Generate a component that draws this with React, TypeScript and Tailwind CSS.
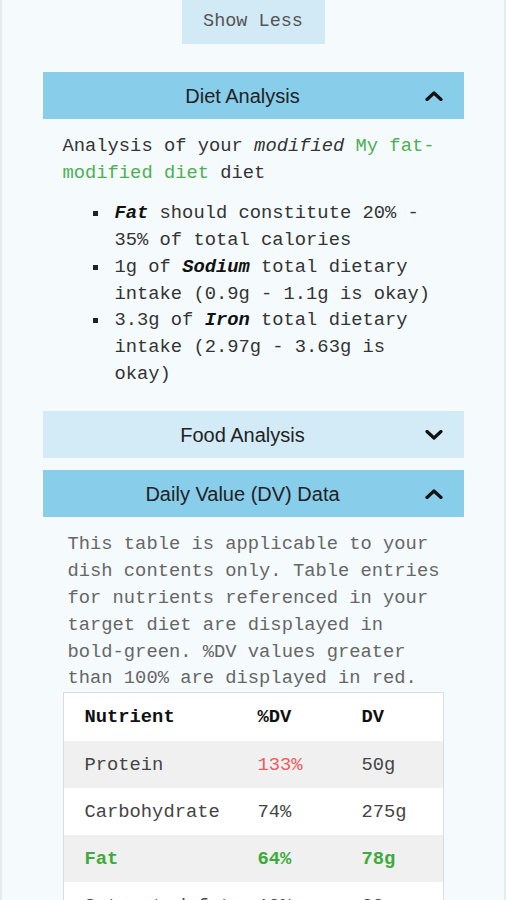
function Chevron({ up }: { up: boolean }) {
    return (
        <svg width="18" height="10" viewBox="0 0 18 10" className="mr-[21px] shrink-0">
            {up ? (
                <polyline points="2,8.5 9,2 16,8.5" fill="none" stroke="#111" strokeWidth="3.2" strokeLinecap="round" strokeLinejoin="round" />
            ) : (
                <polyline points="2,1.5 9,8 16,1.5" fill="none" stroke="#111" strokeWidth="3.2" strokeLinecap="round" strokeLinejoin="round" />
            )}
        </svg>
    )
}

function SectionHeader({ title, open }: { title: string; open: boolean }) {
    return (
        <div className={`flex items-center h-[47px] ${open ? 'bg-[#88cdea]' : 'bg-[#d3ebf7]'}`}>
            <p className="flex-1 pl-[18px] text-center text-[20px] text-[#222] font-['Liberation_Sans',Arial,sans-serif]">{title}</p>
            <Chevron up={open} />
        </div>
    )
}

function Bullet({ children }: { children: React.ReactNode }) {
    return (
        <li className="flex">
            <span className="w-[5px] h-[5px] bg-[#222] mt-[11px] mr-[17px] shrink-0"></span>
            <span>{children}</span>
        </li>
    )
}

const rows = [
    { name: 'Protein', pct: '133%', dv: '50g', kind: 'red' },
    { name: 'Carbohydrate', pct: '74%', dv: '275g', kind: '' },
    { name: 'Fat', pct: '64%', dv: '78g', kind: 'green' },
    { name: 'Saturated fat', pct: '10%', dv: '20g', kind: '' },
]

export default function App() {
    return (
        <div className="min-h-screen bg-[#f5fbfd] border-x-2 border-[#e4ecef] font-['Liberation_Mono',monospace] text-[18.8px]">
            <div className="flex justify-center">
                <button className="w-[143px] h-[44px] bg-[#d2eaf6] text-[#555] text-[18.5px]">Show Less</button>
            </div>

            <div className="mx-auto w-[421px] mt-[28px]">
                <SectionHeader title="Diet Analysis" open={true} />
                <div className="pt-[14px] pb-[10px] px-5 leading-[26.7px] text-[#333]">
                    <p>
                        Analysis of your <i>modified</i> <span className="text-[#4caf50]">My fat-modified diet</span> diet
                    </p>
                    <ul className="mt-[14px] pl-[30px]">
                        <Bullet><b><i className="text-[#111]">Fat</i></b> should constitute 20% - 35% of total calories</Bullet>
                        <Bullet>1g of <b><i className="text-[#111]">Sodium</i></b> total dietary intake (0.9g - 1.1g is okay)</Bullet>
                        <Bullet>3.3g of <b><i className="text-[#111]">Iron</i></b> total dietary intake (2.97g - 3.63g is okay)</Bullet>
                    </ul>
                </div>

                <div className="mt-[14px]">
                    <SectionHeader title="Food Analysis" open={false} />
                </div>

                <div className="mt-[12px]">
                    <SectionHeader title="Daily Value (DV) Data" open={true} />
                    <div className="pt-[14px] px-5">
                        <p className="pl-[5px] leading-[26.8px] text-[#666]">
                            This table is applicable to your dish contents only. Table entries for nutrients referenced in your target diet are displayed in bold-green. %DV values greater than 100% are displayed in red.
                        </p>
                        <div className="border border-[#dcdcdc] bg-white">
                            <div className="grid grid-cols-[173px_104px_1fr] items-center h-[48px] pl-[21px] font-bold text-[#111]">
                                <span>Nutrient</span>
                                <span>%DV</span>
                                <span>DV</span>
                            </div>
                            {rows.map((r, i) => (
                                <div
                                    key={r.name}
                                    className={`grid grid-cols-[173px_104px_1fr] items-center h-[47px] pl-[21px] ${i % 2 === 0 ? 'bg-[#f0f0f0]' : 'bg-white'} ${r.kind === 'green' ? 'text-[#3cab3c] font-bold' : 'text-[#444]'}`}
                                >
                                    <span>{r.name}</span>
                                    <span className={r.kind === 'red' ? 'text-[#f05a5a]' : ''}>{r.pct}</span>
                                    <span>{r.dv}</span>
                                </div>
                            ))}
                        </div>
                    </div>
                </div>
            </div>
        </div>
    )
}
